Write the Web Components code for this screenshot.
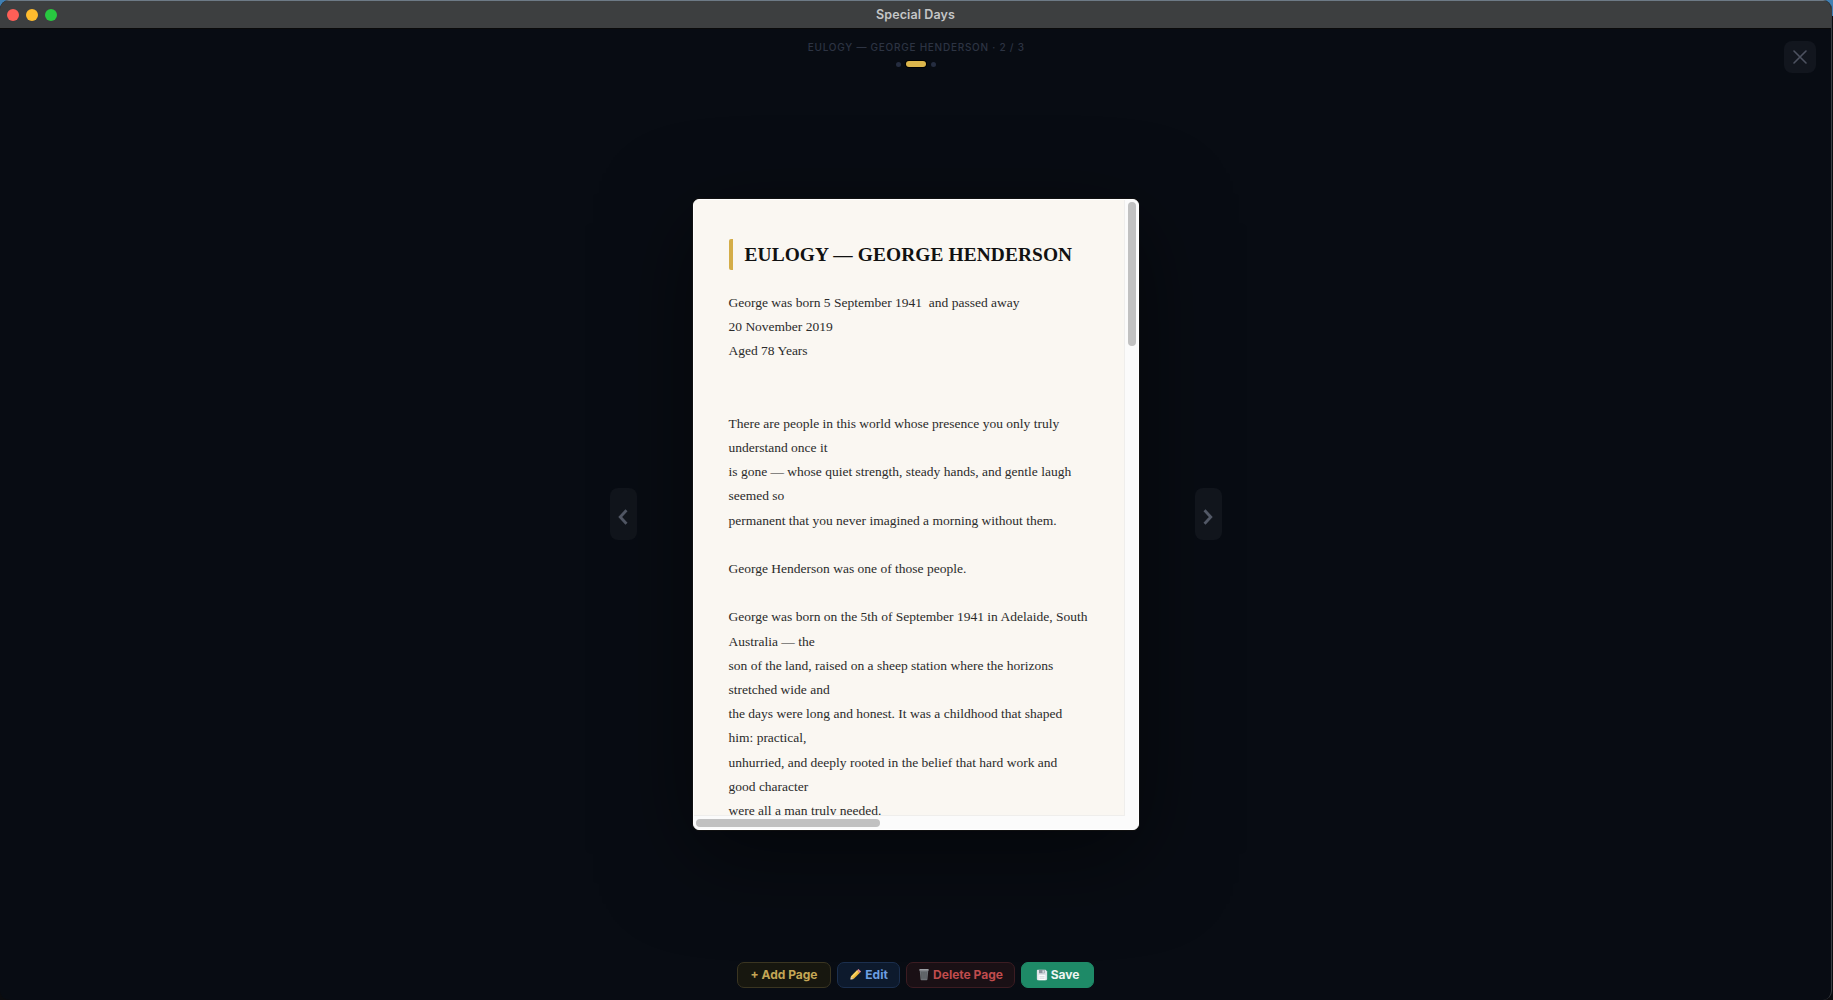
<!DOCTYPE html>
<html lang="en">
<head>
<meta charset="utf-8">
<title>Special Days</title>
<style>
html,body{margin:0;height:100%;overflow:hidden;background:linear-gradient(#3f80b4 0,#3f80b4 16px,#0b0c0f 16px)}
</style>
</head>
<body>
<special-app>
  <mac-titlebar slot="bar">Special Days</mac-titlebar>
  <page-indicator slot="head" pages="3" current="2">EULOGY — GEORGE HENDERSON · 2 / 3</page-indicator>
  <close-button slot="close"></close-button>
  <nav-arrow slot="prev" dir="left"></nav-arrow>
  <doc-page slot="page">
    <doc-title>EULOGY — GEORGE HENDERSON</doc-title>
    <doc-body>
George was born 5 September 1941&nbsp; and passed away<br>
20 November 2019<br>
Aged 78 Years<br>
<br>
<br>
There are people in this world whose presence you only truly<br>
understand once it<br>
is gone — whose quiet strength, steady hands, and gentle laugh<br>
seemed so<br>
permanent that you never imagined a morning without them.<br>
<br>
George Henderson was one of those people.<br>
<br>
George was born on the 5th of September 1941 in Adelaide, South<br>
Australia — the<br>
son of the land, raised on a sheep station where the horizons<br>
stretched wide and<br>
the days were long and honest. It was a childhood that shaped<br>
him: practical,<br>
unhurried, and deeply rooted in the belief that hard work and<br>
good character<br>
were all a man truly needed.
    </doc-body>
  </doc-page>
  <nav-arrow slot="next" dir="right"></nav-arrow>
  <tool-button slot="tools" kind="add">+ Add Page</tool-button>
  <tool-button slot="tools" kind="edit"><svg slot="icon" viewBox="0 0 14 14" width="13" height="13"><path d="M10.2 1l2.8 2.8-1.5 1.5-2.8-2.8z" fill="#ee8d9c"/><path d="M8.7 2.5l2.8 2.8-6.6 6.6-2.8-2.8z" fill="#f0b93a"/><path d="M8.7 2.5l1.4 1.4-6.6 6.6-1.4-1.4z" fill="#f9d468"/><path d="M2.1 9.1l2.8 2.8-3.9 1.1z" fill="#eed2a8"/><path d="M1.6 11.2l1.2 1.2-1.8.6z" fill="#333"/></svg>Edit</tool-button>
  <tool-button slot="tools" kind="delete"><svg slot="icon" viewBox="0 0 14 14" width="12" height="13"><path d="M2 2.2h10l-1 10.6c0 .5-.5.9-1 .9H4c-.5 0-1-.4-1-.9z" fill="#6e7277"/><path d="M1.6 1.2C1.6.8 2 .5 2.4.5h9.2c.4 0 .8.3.8.7v1.4H1.6z" fill="#9a9ea3"/><path d="M4.6 4v8M7 4v8M9.4 4v8" stroke="#44474b" stroke-width=".8"/></svg>Delete Page</tool-button>
  <tool-button slot="tools" kind="save"><svg slot="icon" viewBox="0 0 14 14" width="12" height="12"><path d="M1 2c0-.6.4-1 1-1h9.2L13 2.8V12c0 .6-.4 1-1 1H2c-.6 0-1-.4-1-1z" fill="#dfe3e8"/><rect x="3.5" y="1" width="6.5" height="4" fill="#8b929c"/><rect x="7.6" y="1.6" width="1.5" height="2.8" fill="#e9ecef"/><rect x="3" y="7.2" width="8" height="5.8" fill="#fff"/><path d="M4 9h6M4 10.8h6" stroke="#b8bdc4" stroke-width=".7"/></svg>Save</tool-button>
</special-app>

<script>
function def(name, css, html, init){
  customElements.define(name, class extends HTMLElement{
    constructor(){
      super();
      const root=this.attachShadow({mode:'open'});
      root.innerHTML='<style>'+css+'</style>'+(typeof html==='function'?html(this):html);
    }
    connectedCallback(){ if(init) init(this,this.shadowRoot); }
  });
}

def('special-app',`
  :host{display:flex;flex-direction:column;width:1832px;height:100vh;box-sizing:border-box;background:#080c13;position:relative;
    border-right:1px solid #3a3e44;border-radius:9px;overflow:hidden}
  .stage{flex:1;min-height:0;display:flex;flex-direction:column;position:relative}
  .head{height:42px;display:flex;justify-content:center}
  .main{flex:1;min-height:0;display:flex;align-items:center;justify-content:center;gap:56px}
  .tools{display:flex;justify-content:center;gap:6.3px;padding:4.5px 0 12.5px}
  .close{position:absolute;top:12px;right:15px}
`,`
  <slot name="bar"></slot>
  <div class="stage">
    <div class="head"><slot name="head"></slot></div>
    <div class="close"><slot name="close"></slot></div>
    <div class="main"><slot name="prev"></slot><slot name="page"></slot><slot name="next"></slot></div>
    <div class="tools"><slot name="tools"></slot></div>
  </div>`);

def('mac-titlebar',`
  :host{display:flex;align-items:center;justify-content:center;position:relative;height:29px;box-sizing:border-box;flex:none;
    background:#3d3f40;border-top:1px solid #6d7a86;border-bottom:1px solid #0a0a0a;
    font:600 12.5px Inter,"Liberation Sans",sans-serif;color:#c4c6c7;letter-spacing:.1px}
  .lights{position:absolute;left:6.5px;top:7.5px;display:flex;gap:7px}
  i{display:block;width:12px;height:12px;border-radius:50%}
  i:nth-child(1){background:#fe5f57}
  i:nth-child(2){background:#febc2e}
  i:nth-child(3){background:#28c840}
`,`<div class="lights"><i></i><i></i><i></i></div><slot></slot>`);

def('page-indicator',`
  :host{display:flex;flex-direction:column;align-items:center;padding:12px 0 0 1.5px;
    font:500 10px Inter,"Liberation Sans",sans-serif;letter-spacing:.75px;color:#2d3443;line-height:13px}
  .dots{display:flex;align-items:center;gap:5px;margin-top:7px}
  .dot{width:5px;height:5px;border-radius:50%;background:#252d40}
  .dot.on{width:20px;height:6px;border-radius:3px;background:#dcb64c;box-shadow:0 0 0 1px #000}
`,`<div><slot></slot></div><div class="dots"></div>`,(el,root)=>{
  const box=root.querySelector('.dots');
  if(box.children.length) return;
  const n=+el.getAttribute('pages'),c=+el.getAttribute('current');
  for(let i=1;i<=n;i++){const d=document.createElement('div');d.className='dot'+(i===c?' on':'');box.appendChild(d);}
});

def('close-button',`
  :host{display:flex;align-items:center;justify-content:center;width:32px;height:32px;border-radius:8px;background:#12161e}
  svg{display:block}
`,`<svg width="14" height="14" viewBox="0 0 14 14"><path d="M1 1l12 12M13 1L1 13" stroke="#4d5260" stroke-width="1.6" stroke-linecap="round"/></svg>`);

def('nav-arrow',`
  :host{display:flex;align-items:center;justify-content:center;width:27px;height:52px;box-sizing:border-box;padding-top:6px;border-radius:8px;background:#11151c}
  svg{display:block}
`,el=>{
  const d=el.getAttribute('dir')==='left'?'M9.5 1.2L3.2 8l6.3 6.8':'M2.5 1.2L8.8 8l-6.3 6.8';
  return `<svg width="12" height="16" viewBox="0 0 12 16"><path d="${d}" fill="none" stroke="#525866" stroke-width="2.8"/></svg>`;
});

def('doc-page',`
  :host{display:grid;grid-template:minmax(0,1fr) 13px / minmax(0,1fr) 13px;width:446px;height:631px;box-sizing:border-box;
    border:1px solid #fff;border-radius:6px;overflow:hidden;background:#fbfbfb;
    box-shadow:0 0 0 1px #111,0 24px 90px rgba(0,0,0,.5)}
  .view{overflow:hidden;background:#faf7f2;padding:39px 0 0 35px;box-sizing:border-box;border-right:1px solid #efeeec;border-bottom:1px solid #efeeec}
  .vbar{padding:2px 2px 0 3px}
  .vbar i{display:block;width:8px;height:144px;border-radius:4px;background:#c1c1c1}
  .hbar{padding:3px 0 0 2px}
  .hbar i{display:block;height:8px;width:184px;border-radius:4px;background:#c1c1c1}
`,`<div class="view"><slot></slot></div><div class="vbar"><i></i></div><div class="hbar"><i></i></div><div></div>`);

def('doc-title',`
  :host{display:block;box-sizing:border-box;height:31px;margin-bottom:21px;border-left:4px solid #d4ad48;border-radius:2px;padding-left:12px;
    font:700 19.4px/31px "Liberation Serif",serif;letter-spacing:.1px;color:#111;white-space:nowrap}
`,`<slot></slot>`);

def('doc-body',`
  :host{display:block;font:400 13.5px/24.2px "Liberation Serif",serif;color:#2b2b2b;white-space:nowrap}
`,`<slot></slot>`);

def('tool-button',`
  :host{display:inline-flex;align-items:center;gap:3px;height:25.5px;box-sizing:border-box;padding:0 11px;border-radius:7px;border:1px solid;
    font:700 12px Inter,"Liberation Sans",sans-serif;white-space:nowrap}
  :host([kind=add]){background:#17170f;border-color:#3a3521;color:#c4a655;padding:0 12.5px}
  :host([kind=edit]){background:#0d1a2d;border-color:#1b2f4e;color:#6c9fe2}
  :host([kind=delete]){background:#1a1015;border-color:#3c1c22;color:#c04c4d}
  :host([kind=save]){background:#1e8a67;border-color:#1e8a67;color:#eef6f2;padding:0 13.5px}
  ::slotted(svg){display:block;flex:none}
`,`<slot name="icon"></slot><slot></slot>`);
</script>
</body>
</html>
